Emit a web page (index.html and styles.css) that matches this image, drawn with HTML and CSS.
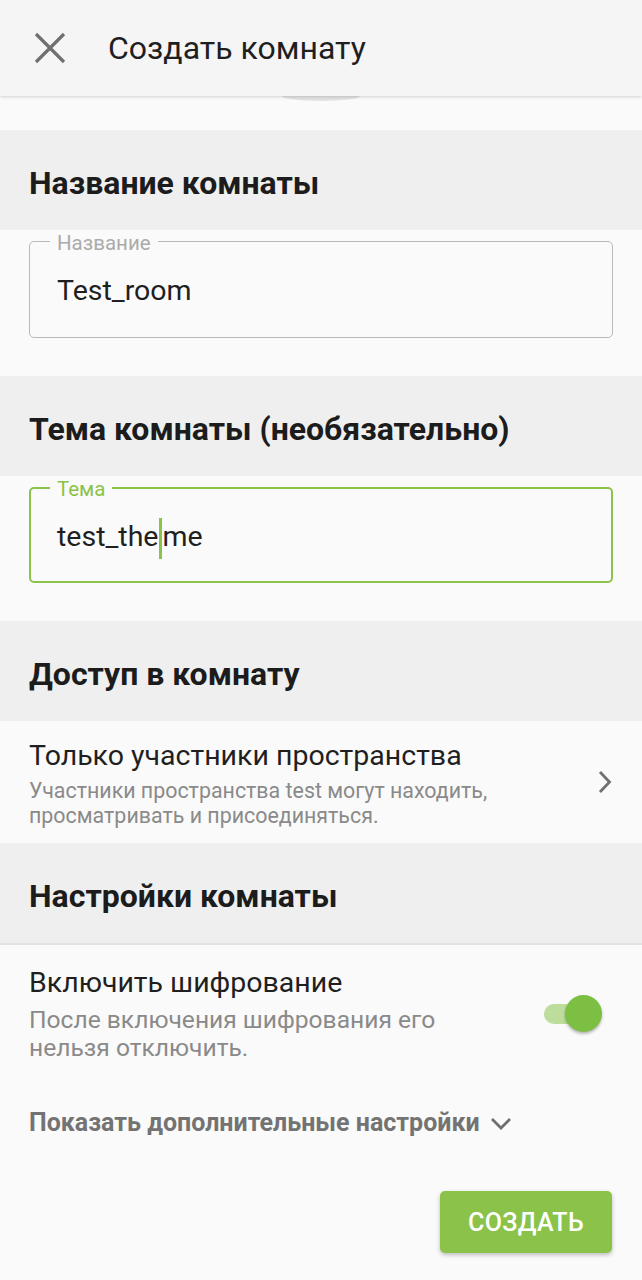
FILE: index.html
```html
<!DOCTYPE html>
<html lang="ru">
<head>
<meta charset="utf-8">
<link rel="stylesheet" href="styles.css">
</head>
<body>
<div class="app">
  <header class="toolbar">
    <svg class="close" width="32" height="32" viewBox="0 0 32 32"><path d="M2 2 L30 30 M30 2 L2 30" stroke="#6f6f6f" stroke-width="3.2" fill="none"/></svg>
    <div class="title">Создать комнату</div>
  </header>
  <div class="avatar-gap"><div class="avatar-arc"></div></div>

  <div class="section">Название комнаты</div>
  <div class="field-wrap">
    <div class="field">
      <span class="label">Название</span>
      <span class="value">Test_room</span>
    </div>
  </div>

  <div class="section">Тема комнаты (необязательно)</div>
  <div class="field-wrap">
    <div class="field focused">
      <span class="label">Тема</span>
      <span class="value">test_the<span class="cursor"></span>me</span>
    </div>
  </div>

  <div class="section">Доступ в комнату</div>
  <div class="row access">
    <div class="row-text">
      <div class="row-title">Только участники пространства</div>
      <div class="row-sub">Участники пространства test могут находить,<br>просматривать и присоединяться.</div>
    </div>
    <svg class="chevron" width="14" height="24" viewBox="0 0 14 24"><path d="M2 2 L11.5 12 L2 22" stroke="#707070" stroke-width="2.8" fill="none"/></svg>
  </div>

  <div class="section bordered">Настройки комнаты</div>
  <div class="row enc">
    <div class="row-text">
      <div class="row-title">Включить шифрование</div>
      <div class="row-sub enc-sub">После включения шифрования его<br>нельзя отключить.</div>
    </div>
    <div class="toggle"><div class="track"></div><div class="thumb"></div></div>
  </div>

  <div class="more">Показать дополнительные настройки
    <svg width="22" height="14" viewBox="0 0 22 14"><path d="M2 2 L11 11 L20 2" stroke="#6f6f6f" stroke-width="2.8" fill="none"/></svg>
  </div>

  <div class="actions">
    <button class="create">СОЗДАТЬ</button>
  </div>
</div>
</body>
</html>
```
FILE: styles.css
```css
* { box-sizing: border-box; }
html, body { margin: 0; padding: 0; }
body {
  background: #fafafa;
  font-family: Roboto, "Noto Sans", sans-serif;
  color: #1f1f1f;
  width: 642px;
  height: 1280px;
  overflow: hidden;
}
.app { display: flex; flex-direction: column; }
.toolbar {
  height: 96px;
  background: #f5f5f5;
  display: flex;
  align-items: center;
  padding-left: 34px;
  box-shadow: 0 1px 3px rgba(0,0,0,0.16);
  position: relative;
  z-index: 2;
}
.title {
  margin-left: 42px;
  font-size: 32px;
  line-height: 38px;
  color: #1f1f1f;
}
.avatar-gap {
  height: 34px;
  display: flex;
  justify-content: center;
}
.avatar-arc {
  width: 78px;
  height: 5px;
  background: #e2e2e2;
  border-radius: 0 0 50% 50% / 0 0 100% 100%;
}
.section {
  height: 100px;
  background: #efefef;
  display: flex;
  align-items: center;
  padding-left: 29px;
  font-size: 32px;
  font-weight: 700;
  color: #1c1c1c;
  padding-top: 5px;
}
.section.bordered { border-bottom: 2px solid #e2e2e2; height: 102px; }
.field-wrap {
  padding: 11px 29px 38px 29px;
}
.field {
  position: relative;
  height: 97px;
  border: 1.5px solid #b9b9b9;
  border-radius: 5px;
  display: flex;
  align-items: center;
  padding-left: 27px;
}
.field.focused { border: 2.5px solid #8bc34a; height: 96px; padding-left: 26px; }
.label {
  position: absolute;
  top: -11px;
  left: 20px;
  padding: 0 7px;
  background: #fafafa;
  font-size: 20.5px;
  line-height: 24px;
  color: #ababab;
}
.focused .label { color: #8bc34a; top: -12px; left: 19px; }
.value {
  font-size: 28.5px;
  color: #1f1f1f;
  margin-top: 2px;
  display: inline-flex;
  align-items: center;
}
.cursor {
  display: inline-block;
  width: 3px;
  height: 41px;
  background: #8bc34a;
  position: relative;
  top: 2px;
  margin-left: 1px;
}
.row {
  display: flex;
  align-items: center;
  padding: 0 30px 0 29px;
}
.row-text { flex: 1; }
.row-title { font-size: 28.5px; color: #1f1f1f; line-height: 34px; }
.row-sub { font-size: 21.4px; color: #8a8a8a; line-height: 25px; margin-top: 5px; }
.access { height: 122px; }
.access .row-text { padding-top: 2px; }
.enc { padding-top: 21px; }
.enc-sub { font-size: 24.6px; line-height: 28px; margin-top: 6px; }
.toggle { position: relative; width: 60px; height: 36px; margin-right: 10px; }
.track {
  position: absolute; left: 2px; top: 8px; width: 50px; height: 20px;
  border-radius: 10px; background: #bcdd9c;
}
.thumb {
  position: absolute; right: 0; top: -1px; width: 37px; height: 37px;
  border-radius: 50%; background: #7cbf42;
  box-shadow: 0 2px 3px rgba(0,0,0,0.28);
}
.more {
  display: flex; align-items: center; gap: 10px;
  padding-left: 29px;
  margin-top: 46px;
  font-size: 25px; line-height: 30px; font-weight: 700; color: #737373;
}
.more svg { margin-top: 2px; }
.actions {
  display: flex; justify-content: flex-end;
  padding-right: 30px;
  margin-top: 53px;
}
.create {
  width: 172px; height: 62px;
  background: #8bc34a;
  border: none; border-radius: 5px;
  color: #fff;
  font-family: Roboto, sans-serif;
  font-size: 25px; font-weight: 500;
  letter-spacing: 0.3px;
  box-shadow: 0 2px 4px rgba(0,0,0,0.25);
}
```
